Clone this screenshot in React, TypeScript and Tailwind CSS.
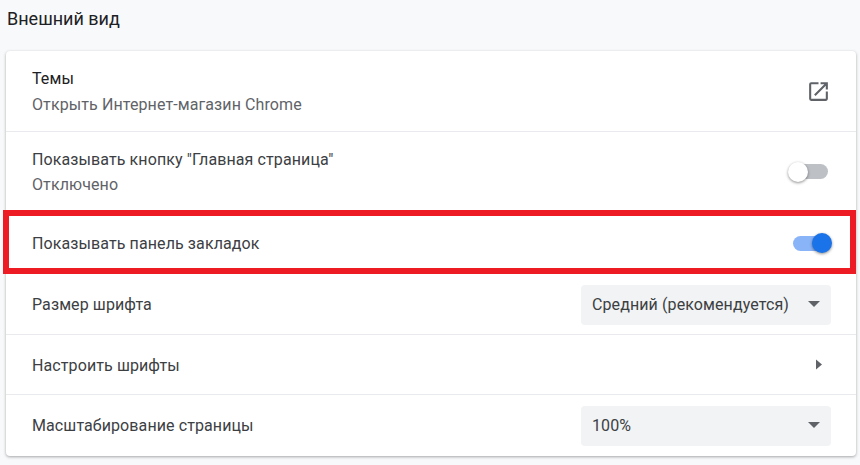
import React from 'react';

function Toggle({ on }: { on: boolean }) {
  return (
    <div className="relative w-[35px] h-[15px]">
      <div className={`absolute left-0 top-0 w-[35px] h-[15px] rounded-full ${on ? 'bg-[#8ab4f8]' : 'bg-[#bdc1c6]'}`} />
      <div
        className={`absolute top-[-2.5px] w-5 h-5 rounded-full shadow-[0_1px_3px_rgba(0,0,0,0.45)] ${
          on ? 'right-[-4px] bg-[#1a73e8]' : 'left-[-5px] bg-white'
        }`}
      />
    </div>
  );
}

function Dropdown({ label }: { label: string }) {
  return (
    <div className="w-[250px] h-10 mr-[25px] pl-[11px] pr-[11px] flex items-center justify-between rounded-[4px] bg-[#f1f3f4] text-[16px] text-[#3c4043]">
      <span className="tracking-[0.1px] mt-[1px]">{label}</span>
      <svg width="12" height="6" viewBox="0 0 12 6" className="mt-[-1px]">
        <path d="M0 0h12L6 6z" fill="#5f6368" />
      </svg>
    </div>
  );
}

export default function App() {
  return (
    <div className="w-[860px] h-[465px] overflow-hidden bg-[#f8f9fa] font-['Roboto',sans-serif]">
      <h2 className="h-[51px] pl-[7px] pt-[7px] text-[18px] leading-6 text-[#202124]">Внешний вид</h2>
      <div className="ml-[6px] w-[850px] h-[405px] bg-white rounded-[4px] shadow-[0_1px_3px_rgba(60,64,67,0.45)] flex flex-col text-[16px] text-[#3c4043] tracking-[0.1px]">
        <div className="h-[81px] shrink-0 pl-[26px] pr-[28px] flex items-center justify-between border-b border-[#e8eaed]">
          <div className="flex flex-col gap-[6px] leading-5 mt-[1px]">
            <span className="text-[#202124]">Темы</span>
            <span className="text-[#5f6368]">Открыть Интернет-магазин Chrome</span>
          </div>
          <svg width="25" height="25" viewBox="0 0 24 24" className="mr-[-3px]">
            <path
              d="M19 19H5V5h7V3H5a2 2 0 0 0-2 2v14a2 2 0 0 0 2 2h14c1.1 0 2-.9 2-2v-7h-2v7zM14 3v2h3.59l-9.83 9.83 1.41 1.41L19 6.41V10h2V3h-7z"
              fill="#5f6368"
            />
          </svg>
        </div>
        <div className="h-[79px] shrink-0 pl-[26px] pr-[28px] flex items-center justify-between">
          <div className="flex flex-col gap-[5px] leading-5 mt-[2px]">
            <span>Показывать кнопку "Главная страница"</span>
            <span className="text-[#5f6368]">Отключено</span>
          </div>
          <Toggle on={false} />
        </div>
        <div className="relative h-[64px] shrink-0 pl-[26px] pr-[28px] flex items-center justify-between">
          <span className="mt-[2px]">Показывать панель закладок</span>
          <Toggle on />
          <div className="absolute left-[-3px] top-[-1px] w-[853px] h-[64px] border-[6px] border-[#ed1c24]" />
        </div>
        <div className="h-[60px] shrink-0 pl-[26px] flex items-center justify-between border-b border-[#e8eaed]">
          <span>Размер шрифта</span>
          <Dropdown label="Средний (рекомендуется)" />
        </div>
        <div className="h-[60px] shrink-0 pl-[26px] pr-[34px] flex items-center justify-between border-b border-[#e8eaed]">
          <span className="mt-[2px]">Настроить шрифты</span>
          <svg width="6" height="11" viewBox="0 0 6 10">
            <path d="M0 0l6 5-6 5z" fill="#5f6368" />
          </svg>
        </div>
        <div className="flex-1 pl-[26px] flex items-center justify-between">
          <span>Масштабирование страницы</span>
          <Dropdown label="100%" />
        </div>
      </div>
    </div>
  );
}
